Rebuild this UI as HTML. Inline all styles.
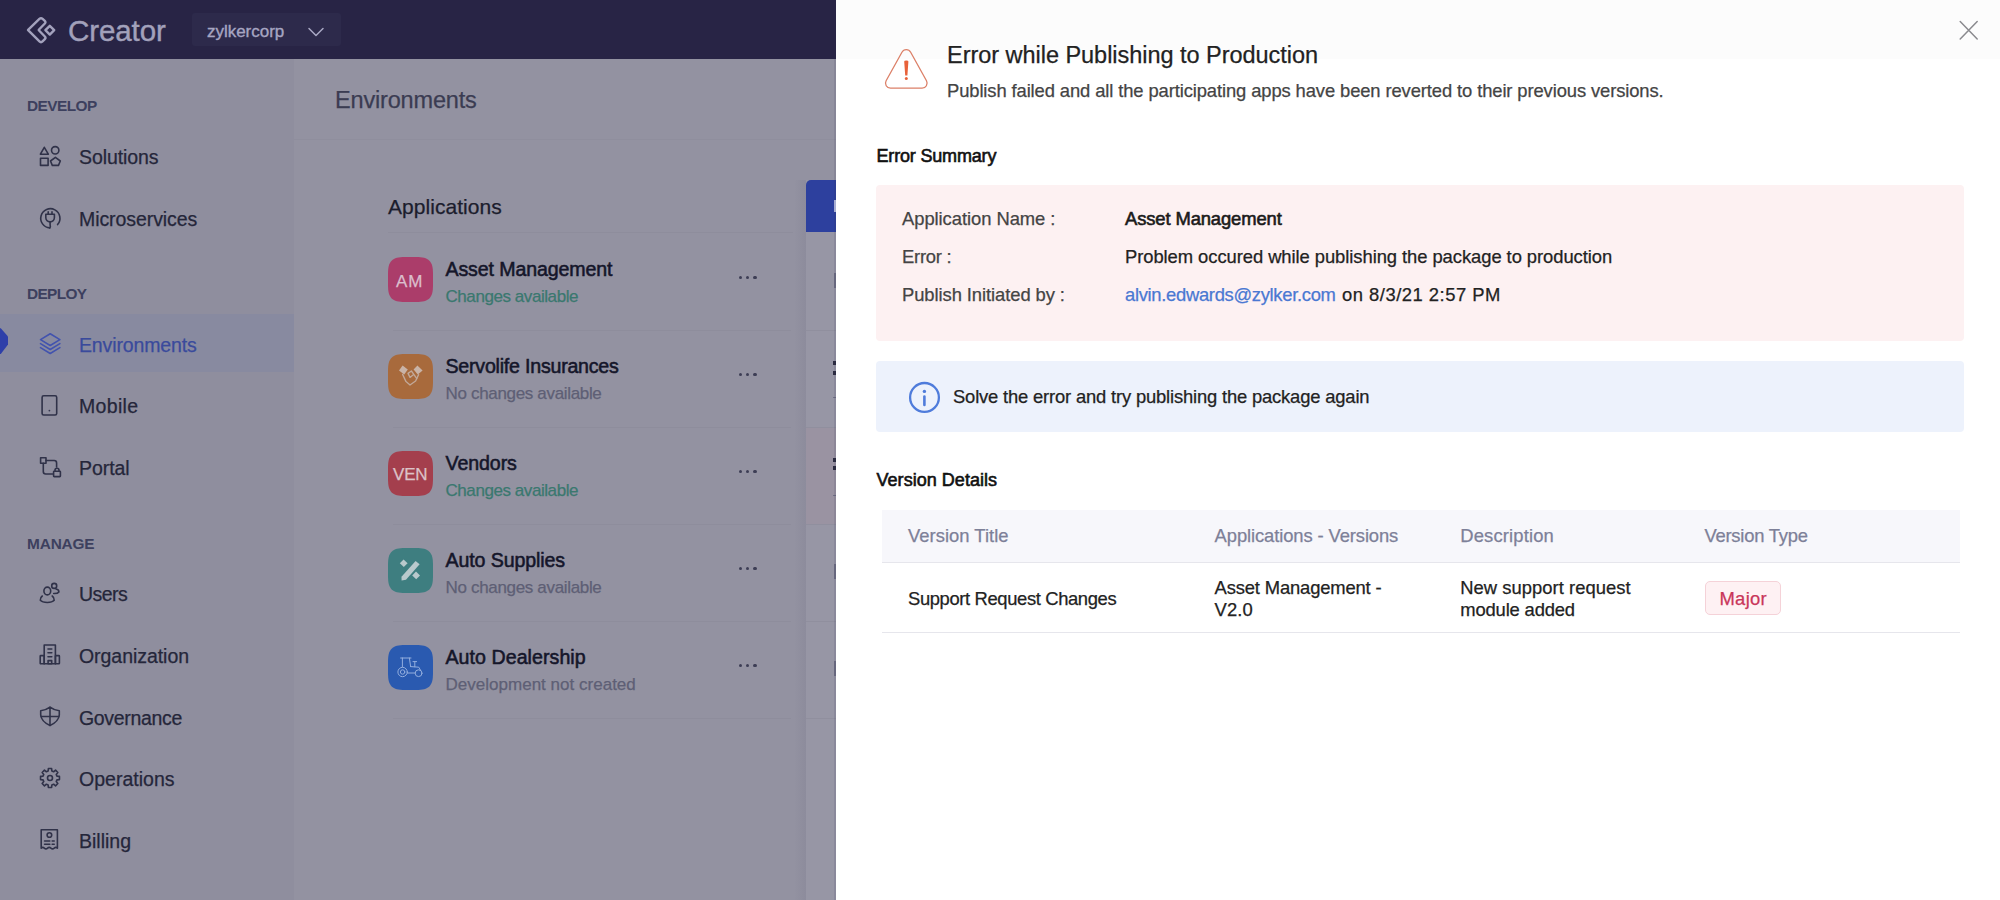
<!DOCTYPE html>
<html lang="en">
<head>
<meta charset="utf-8">
<title>Creator - Environments</title>
<style>
*{box-sizing:border-box;margin:0;padding:0}
html,body{width:2000px;height:900px;overflow:hidden;background:#9392a1;font-family:"Liberation Sans",sans-serif;}
.abs,.t{position:absolute}
.t{white-space:nowrap;line-height:1;-webkit-text-stroke:0.25px currentColor}
.b{font-weight:bold}
#header{position:absolute;left:0;top:0;width:2000px;height:59px;background:#282445}
#sidebar{position:absolute;left:0;top:59px;width:294px;height:841px;background:#8f8e9e}
#main{position:absolute;left:294px;top:59px;width:542px;height:841px;background:#9392a1}
#panel{position:absolute;left:836px;top:0;width:1164px;height:900px;background:#fff}
.sec{font-size:15.4px;font-weight:bold;color:#3d405e;left:27px;-webkit-text-stroke:0}
.nav{font-size:19.5px;color:#25263a;left:79px}
.ico{position:absolute;overflow:visible}
.ico *{fill:none;stroke:#303249;stroke-width:1.6;stroke-linecap:round;stroke-linejoin:round}
.ico .bl *{stroke:#4253ae}
.app{font-size:19.6px;color:#15162a;left:445.5px;-webkit-text-stroke:0.55px #15162a}
.sub{font-size:17px;left:445.5px}
.g{color:#3a786f}
.m{color:#5e5f75}
.hr{position:absolute;height:1px;background:#8e8d9c}
.sq{position:absolute;left:388px;width:45px;height:45px;border-radius:15px}
.dots{position:absolute;left:738.8px;width:20px;height:4px}
.dots i{position:absolute;top:0;width:3.4px;height:3.4px;border-radius:50%;background:#3d3e55}
.p{font-size:18.4px;color:#222}
.sb{-webkit-text-stroke:0.6px currentColor}
.lab{color:#444;left:902px}
.th{color:#7d8098}
</style>
</head>
<body>
<div id="header">
  <svg class="abs" style="left:24px;top:13px" width="34" height="34" viewBox="0 0 34 34">
    <g fill="none" stroke="#a3a2bd" stroke-width="2.4" stroke-linejoin="round" stroke-linecap="round">
      <path d="M4.11 17.21 Q3.90 17.00 4.12 16.79 L15.41 5.93 Q17.00 4.40 18.60 5.91 L20.79 7.97 Q22.10 9.20 20.85 10.50 L14.81 16.78 Q14.60 17.00 14.81 17.22 L20.85 23.50 Q22.10 24.80 20.84 26.09 L18.54 28.43 Q17.00 30.00 15.44 28.45 Z"/>
      <path d="M21.4 17.2 L25.8 12.8 L30.2 17.2 L25.8 21.6 Z"/>
    </g>
  </svg>
  <div class="t" style="top:16px;left:68px;font-size:29.5px;color:#a2a1bb;-webkit-text-stroke:0.4px #a2a1bb;letter-spacing:-0.087px">Creator</div>
  <div class="abs" style="left:192px;top:13px;width:149px;height:33px;background:#2d2a4b;border-radius:3px"></div>
  <div class="t" style="top:23px;left:207px;font-size:17px;color:#a7a6c2;-webkit-text-stroke:0.35px #a7a6c2;letter-spacing:-0.023px">zylkercorp</div>
  <svg class="abs" style="left:307px;top:26px" width="18" height="12" viewBox="0 0 18 12"><path d="M2 2.5 L9 9.5 L16 2.5" fill="none" stroke="#a9a8c4" stroke-width="1.5" stroke-linecap="round" stroke-linejoin="round"/></svg>
</div>

<div id="sidebar"></div>
<div class="abs" style="left:0;top:314px;width:294px;height:58px;background:#888aa0"></div>
<svg class="abs" style="left:0;top:326px" width="10" height="30" viewBox="0 0 10 30"><path d="M0 2.2 L0.8 2.2 L8 10.6 L8 18.6 L0.8 28 L0 28 Z" fill="#2e3fa9"/></svg>
<div class="t sec" style="top:98px;;letter-spacing:-0.556px">DEVELOP</div>
<div class="t nav" style="top:148px;;letter-spacing:-0.085px">Solutions</div>
<div class="t nav" style="top:210px;;letter-spacing:-0.078px">Microservices</div>
<div class="t sec" style="top:286px;;letter-spacing:-0.641px">DEPLOY</div>
<div class="t nav" style="top:336px;color:#3a4a9c;letter-spacing:-0.138px">Environments</div>
<div class="t nav" style="top:397px;;letter-spacing:0.318px">Mobile</div>
<div class="t nav" style="top:459px;;letter-spacing:-0.052px">Portal</div>
<div class="t sec" style="top:536px;;letter-spacing:-0.154px">MANAGE</div>
<div class="t nav" style="top:585px;;letter-spacing:-0.562px">Users</div>
<div class="t nav" style="top:647px;;letter-spacing:-0.047px">Organization</div>
<div class="t nav" style="top:709px;;letter-spacing:-0.325px">Governance</div>
<div class="t nav" style="top:770px;;letter-spacing:0.016px">Operations</div>
<div class="t nav" style="top:832px;;letter-spacing:-0.004px">Billing</div>

<svg class="ico" style="left:40px;top:146px" width="21" height="21" viewBox="0 0 21 21">
  <path d="M4.3 1.3 L8.3 8.2 L0.4 8.2 Z"/><circle cx="15.2" cy="4.3" r="3.7"/><rect x="0.5" y="12.2" width="7.6" height="7.2"/><path d="M15.4 11.4 L20.3 15 L18.5 19.4 L12.3 19.4 L10.5 15 Z"/>
</svg>
<svg class="ico" style="left:40px;top:208px" width="21" height="21" viewBox="0 0 21 21">
  <path d="M9.8 19.9 A9.6 9.6 0 1 1 17.6 16.6"/>
  <path d="M5.8 6.2 L14.4 6.2 L14.4 9.6 A4.3 4.3 0 0 1 5.8 9.6 Z"/>
  <path d="M8.2 6 L8.2 3.9 M12 6 L12 3.9"/>
  <path d="M10.1 14 L10.1 17 A2.9 2.9 0 0 1 9.8 19.9"/>
</svg>
<svg class="ico" style="left:40px;top:333px" width="21" height="22" viewBox="0 0 21 22">
  <g class="bl"><path d="M10.2 0.7 L19.9 6.6 L10.2 12.5 L0.5 6.6 Z"/><path d="M0.5 10.6 L10.2 16.5 L19.9 10.6"/><path d="M0.5 14.6 L10.2 20.5 L19.9 14.6"/></g>
</svg>
<svg class="ico" style="left:41px;top:395px" width="17" height="21" viewBox="0 0 17 21">
  <rect x="1.1" y="0.8" width="14.6" height="19.2" rx="1.6"/><circle cx="8.4" cy="15.6" r="0.9" style="fill:#363850;stroke:none"/>
</svg>
<svg class="ico" style="left:40px;top:457px" width="22" height="21" viewBox="0 0 22 21">
  <rect x="0.6" y="0.8" width="5.4" height="5.4"/>
  <path d="M6 3.5 L14.2 3.5 A2.4 2.4 0 0 1 16.6 5.9 L16.6 10"/>
  <path d="M3.3 6.2 L3.3 14.6 A2.4 2.4 0 0 0 5.7 17 L12.6 17"/>
  <rect x="13.6" y="14.2" width="6.8" height="5.4" rx="0.6"/>
  <path d="M15 14.2 L15 13.3 A2 2 0 0 1 19 13.3 L19 14.2"/>
</svg>
<svg class="ico" style="left:39px;top:583px" width="22" height="21" viewBox="0 0 22 21">
  <ellipse cx="8.3" cy="8" rx="3.4" ry="3.9"/>
  <path d="M3.3 13 C1.8 14 1.2 15.6 1.3 17.3 C4 20.2 12.6 20.2 15.2 17.3 C15.3 15.6 14.6 14 13.2 13"/>
  <circle cx="15.2" cy="2.9" r="2.5"/>
  <path d="M17 6 C18.8 6.4 20 7.4 19.9 9 C19 10.2 17 10.6 14.7 10.5"/>
</svg>
<svg class="ico" style="left:39px;top:644px" width="22" height="21" viewBox="0 0 22 21">
  <path d="M5.2 19.8 L5.2 1 L16.4 1 L16.4 19.8"/>
  <rect x="1.2" y="11.6" width="4" height="8.2" rx="0.6"/><rect x="16.4" y="11.6" width="4" height="8.2" rx="0.6"/>
  <path d="M5.2 19.8 L16.4 19.8"/>
  <path d="M9 5 L12.8 5 M9 8.8 L12.8 8.8 M9 12.7 L12.8 12.7"/>
  <rect x="9.1" y="16.6" width="3.6" height="3.2"/>
</svg>
<svg class="ico" style="left:39.7px;top:706px" width="21" height="21" viewBox="0 0 21 21">
  <path d="M10 1.2 C7.4 3.2 4 4.4 0.7 4.7 L0.7 9 C1.2 13.6 4.4 17 10 19.4 C15.6 17 18.8 13.6 19.3 9 L19.3 4.7 C16 4.4 12.6 3.2 10 1.2 Z"/>
  <path d="M10 1.2 L10 19.4 M1.2 10.5 L18.8 10.5"/>
</svg>
<svg class="ico" style="left:39.8px;top:767.7px" width="20" height="20" viewBox="-10 -10 20 20">
  <path d="M6.96 -1.85 L9.46 -1.62 L9.46 1.62 L6.96 1.85 L6.23 3.61 L7.84 5.54 L5.54 7.84 L3.61 6.23 L1.85 6.96 L1.62 9.46 L-1.62 9.46 L-1.85 6.96 L-3.61 6.23 L-5.54 7.84 L-7.84 5.54 L-6.23 3.61 L-6.96 1.85 L-9.46 1.62 L-9.46 -1.62 L-6.96 -1.85 L-6.23 -3.61 L-7.84 -5.54 L-5.54 -7.84 L-3.61 -6.23 L-1.85 -6.96 L-1.62 -9.46 L1.62 -9.46 L1.85 -6.96 L3.61 -6.23 L5.54 -7.84 L7.84 -5.54 L6.23 -3.61 Z"/><circle cx="0" cy="0" r="2.5"/>
</svg>
<svg class="ico" style="left:40px;top:829px" width="19" height="21" viewBox="0 0 19 21">
  <path d="M1.2 19.2 L1.2 0.8 L17.4 0.8 L17.4 19.2 C16.4 18.2 15.3 18.2 14.2 19.2 C13.1 20.2 12 20.2 10.9 19.2 C9.8 18.2 8.7 18.2 7.6 19.2 C6.5 20.2 5.4 20.2 4.3 19.2 C3.2 18.2 2.2 18.2 1.2 19.2 Z"/>
  <circle cx="9.4" cy="6" r="2.3"/>
  <path d="M4.6 12 L9.8 12 M12.2 12 L14.2 12 M4.6 15.2 L9.8 15.2 M12.2 15.2 L14.2 15.2"/>
</svg>


<div id="main"></div>
<div class="t" style="top:89px;left:335px;font-size:23.5px;color:#3b3c52;letter-spacing:-0.168px">Environments</div>
<div class="hr" style="left:294px;top:139px;width:542px;background:#8f8e9d"></div>
<div class="t" style="top:196px;left:388px;font-size:21px;color:#1c1d2d;letter-spacing:0.039px">Applications</div>
<div class="hr" style="left:388px;top:232px;width:405px"></div>
<div class="hr" style="left:393px;top:330px;width:398px"></div>
<div class="hr" style="left:393px;top:427px;width:398px"></div>
<div class="hr" style="left:393px;top:524px;width:398px"></div>
<div class="hr" style="left:393px;top:621px;width:398px"></div>
<div class="hr" style="left:393px;top:718px;width:398px"></div>

<svg class="abs" style="left:388px;top:257px" width="45" height="45" viewBox="0 0 45 45"><path d="M0 17 C0 4 4 0 17 0 L28 0 C41 0 45 4 45 17 L45 28 C45 41 41 45 28 45 L17 45 C4 45 0 41 0 28 Z" fill="#ab3d6a"/></svg>
<div class="t" style="top:273px;left:396px;font-size:17px;color:#dbbfcd;letter-spacing:0.977px">AM</div>
<div class="t app" style="top:260px;;letter-spacing:-0.121px">Asset Management</div>
<div class="t sub g" style="top:288px;;letter-spacing:-0.433px">Changes available</div>
<div class="dots" style="top:276px"><i style="left:0"></i><i style="left:7.2px"></i><i style="left:14.4px"></i></div>

<svg class="abs" style="left:388px;top:354px" width="45" height="45" viewBox="0 0 45 45"><path d="M0 17 C0 4 4 0 17 0 L28 0 C41 0 45 4 45 17 L45 28 C45 41 41 45 28 45 L17 45 C4 45 0 41 0 28 Z" fill="#a86a3c"/></svg>
<div class="t app" style="top:357px;;letter-spacing:-0.22px">Servolife Insurances</div>
<div class="t sub m" style="top:385px;;letter-spacing:-0.328px">No changes available</div>
<div class="dots" style="top:373px"><i style="left:0"></i><i style="left:7.2px"></i><i style="left:14.4px"></i></div>

<svg class="abs" style="left:388px;top:451px" width="45" height="45" viewBox="0 0 45 45"><path d="M0 17 C0 4 4 0 17 0 L28 0 C41 0 45 4 45 17 L45 28 C45 41 41 45 28 45 L17 45 C4 45 0 41 0 28 Z" fill="#a43f4d"/></svg>
<div class="t" style="top:466px;left:393px;font-size:17px;color:#dcc3c8;letter-spacing:-0.182px">VEN</div>
<div class="t app" style="top:454px;;letter-spacing:-0.085px">Vendors</div>
<div class="t sub g" style="top:482px;;letter-spacing:-0.433px">Changes available</div>
<div class="dots" style="top:470px"><i style="left:0"></i><i style="left:7.2px"></i><i style="left:14.4px"></i></div>

<svg class="abs" style="left:388px;top:548px" width="45" height="45" viewBox="0 0 45 45"><path d="M0 17 C0 4 4 0 17 0 L28 0 C41 0 45 4 45 17 L45 28 C45 41 41 45 28 45 L17 45 C4 45 0 41 0 28 Z" fill="#3e7e80"/></svg>
<div class="t app" style="top:551px;;letter-spacing:-0.106px">Auto Supplies</div>
<div class="t sub m" style="top:579px;;letter-spacing:-0.328px">No changes available</div>
<div class="dots" style="top:567px"><i style="left:0"></i><i style="left:7.2px"></i><i style="left:14.4px"></i></div>

<svg class="abs" style="left:388px;top:645px" width="45" height="45" viewBox="0 0 45 45"><path d="M0 17 C0 4 4 0 17 0 L28 0 C41 0 45 4 45 17 L45 28 C45 41 41 45 28 45 L17 45 C4 45 0 41 0 28 Z" fill="#2a5ab0"/></svg>
<div class="t app" style="top:648px;;letter-spacing:0.051px">Auto Dealership</div>
<div class="t sub m" style="top:676px;;letter-spacing:0.016px">Development not created</div>
<div class="dots" style="top:664px"><i style="left:0"></i><i style="left:7.2px"></i><i style="left:14.4px"></i></div>

<div class="abs" style="left:794px;top:180px;width:12px;height:720px;background:linear-gradient(90deg,rgba(60,58,90,0),rgba(60,58,90,0.07))"></div>
<div class="abs" style="left:806px;top:180px;width:30px;height:720px;background:#9796a5"></div>
<div class="abs" style="left:806px;top:428px;width:30px;height:96px;background:#9a93a2"></div>
<div class="hr" style="left:806px;top:330px;width:30px;background:#908f9e"></div>
<div class="hr" style="left:806px;top:427px;width:30px;background:#908f9e"></div>
<div class="hr" style="left:806px;top:524px;width:30px;background:#908f9e"></div>
<div class="hr" style="left:806px;top:621px;width:30px;background:#908f9e"></div>
<div class="hr" style="left:806px;top:718px;width:30px;background:#908f9e"></div>
<div class="abs" style="left:806px;top:180px;width:30px;height:52px;background:#2d409e;border-radius:5px 0 0 0"></div>
<div class="abs" style="left:834px;top:200px;width:2px;height:12px;background:#b9c0e4"></div>
<div class="abs" style="left:834px;top:273px;width:2px;height:15px;background:#6f6f84"></div>
<div class="abs" style="left:833px;top:361px;width:3px;height:4px;background:#2c2c40"></div>
<div class="abs" style="left:833px;top:371px;width:3px;height:4px;background:#2c2c40"></div>
<div class="abs" style="left:833px;top:397px;width:3px;height:1px;background:#6f6f84"></div>
<div class="abs" style="left:833px;top:458px;width:3px;height:4px;background:#2c2c40"></div>
<div class="abs" style="left:833px;top:466px;width:3px;height:4px;background:#2c2c40"></div>
<div class="abs" style="left:833px;top:495px;width:3px;height:1px;background:#6f6f84"></div>
<div class="abs" style="left:834px;top:564px;width:2px;height:15px;background:#6f6f84"></div>
<div class="abs" style="left:834px;top:661px;width:2px;height:15px;background:#6f6f84"></div>
<div class="abs" style="left:834px;top:59px;width:2px;height:841px;background:rgba(50,48,80,0.12)"></div>

<svg class="abs" style="left:388px;top:354px" width="45" height="45" viewBox="0 0 45 45">
  <g fill="#c9b3a6"><path d="M14.6 11.6 L19.8 15.6 L16.2 20.6 L11 16.6 Z"/><path d="M29.4 11.6 L34.6 16.6 L29.8 20.6 L25.6 15.6 Z"/></g>
  <g fill="none" stroke="#c2a999" stroke-width="1.3" stroke-linecap="round" stroke-linejoin="round"><path d="M14.6 20.4 L18 27.6 L22 31 L27.6 27 L30.6 20.6"/><path d="M20 19.4 L23.4 17 L28.8 24.6 M20 19.4 L22 23.4 L25 21"/></g>
</svg>
<svg class="abs" style="left:388px;top:548px" width="45" height="45" viewBox="0 0 45 45">
  <g fill="#b9c9cc"><path d="M13.5 28.8 L27.6 13 L31.6 16.2 L18 31.8 L13.6 32.4 Z"/><path d="M15.6 11.4 L19.6 15.2 L15.8 19 L11.8 15.2 Z"/><path d="M28 23.6 L32 27.4 L28.2 31.2 L24.2 27.4 Z"/></g>
</svg>
<svg class="abs" style="left:388px;top:645px" width="45" height="45" viewBox="0 0 45 45">
  <g fill="none" stroke="#93aede" stroke-width="1" stroke-linecap="round" stroke-linejoin="round">
    <circle cx="14.6" cy="27" r="4.7"/><circle cx="14.6" cy="27" r="2.2"/><circle cx="30.6" cy="28.2" r="3.4"/>
    <path d="M12.6 13 L23 13 M14.4 13 L14.4 21.8 M21.4 13 L22.6 21.6 M22.6 21.6 L30.8 22.2 L32.4 25 M19.4 28 L27.2 28 M26.8 16.6 L26.8 21.8 M25 16.6 L28.6 16.6"/>
  </g>
</svg>


<div id="panel"></div>
<div class="abs" style="left:836px;top:0;width:1164px;height:59px;background:#fcfcfc"></div>
<svg class="abs" style="left:1958px;top:20px" width="22" height="22" viewBox="0 0 22 22"><path d="M2.2 1.6 L19.2 19 M19.2 1.6 L2.2 19" fill="none" stroke="#8a8a8e" stroke-width="1.5" stroke-linecap="round"/></svg>
<svg class="abs" style="left:880px;top:44px" width="54" height="50" viewBox="0 0 54 50">
  <path d="M21.93 8.28 A5.0 5.0 0 0 1 30.67 8.28 L46.48 36.77 A5.0 5.0 0 0 1 42.11 44.20 L10.49 44.20 A5.0 5.0 0 0 1 6.12 36.77 Z" fill="none" stroke="#dc8068" stroke-width="1.3" stroke-linejoin="round"/>
  <path d="M24.2 17.6 Q24.1 16.6 26.3 16.6 Q28.5 16.6 28.4 17.6 L27.4 31.4 L25.2 31.4 Z" fill="#e8623a"/>
  <circle cx="26.3" cy="34.6" r="1.5" fill="#e8623a"/>
</svg>
<div class="t" style="top:44px;left:947px;font-size:23.5px;color:#222;letter-spacing:-0.033px">Error while Publishing to Production</div>
<div class="t p" style="top:82px;left:947px;color:#444;letter-spacing:-0.112px">Publish failed and all the participating apps have been reverted to their previous versions.</div>
<div class="t p sb" style="top:147px;left:876.5px;font-size:18px;color:#111;letter-spacing:-0.175px">Error Summary</div>

<div class="abs" style="left:876px;top:185px;width:1088px;height:156px;background:#fdf1f2;border-radius:4px"></div>
<div class="t p lab" style="top:210px;;letter-spacing:-0.055px">Application Name :</div>
<div class="t p sb" style="top:210px;left:1125px;color:#1a1a1a;letter-spacing:-0.112px">Asset Management</div>
<div class="t p lab" style="top:248px;;letter-spacing:-0.239px">Error :</div>
<div class="t p" style="top:248px;left:1125px;letter-spacing:-0.062px">Problem occured while publishing the package to production</div>
<div class="t p lab" style="top:286px;;letter-spacing:-0.077px">Publish Initiated by :</div>
<div class="t p" style="top:286px;left:1125px;color:#4a78d2;letter-spacing:-0.308px">alvin.edwards@zylker.com</div>
<div class="t p" style="top:286px;left:1342px;letter-spacing:0.502px">on 8/3/21 2:57 PM</div>

<div class="abs" style="left:876px;top:361px;width:1088px;height:71px;background:#edf2fc;border-radius:4px"></div>
<svg class="abs" style="left:906px;top:379px" width="36" height="36" viewBox="0 0 36 36">
  <circle cx="18.5" cy="18.4" r="14.4" fill="none" stroke="#4f7cdb" stroke-width="2.3"/>
  <path d="M18.4 17.6 L18.4 26" stroke="#4f7cdb" stroke-width="2.6" stroke-linecap="round" fill="none"/>
  <circle cx="18.4" cy="12.4" r="1.7" fill="#4f7cdb"/>
</svg>
<div class="t p" style="top:388px;left:953px;letter-spacing:-0.172px">Solve the error and try publishing the package again</div>

<div class="t p sb" style="top:471px;left:876.5px;font-size:18px;color:#111;letter-spacing:0.036px">Version Details</div>
<div class="abs" style="left:882px;top:510px;width:1078px;height:52px;background:#f7f7fb"></div>
<div class="abs" style="left:882px;top:562px;width:1078px;height:1px;background:#e6e6ec"></div>
<div class="abs" style="left:882px;top:632px;width:1078px;height:1px;background:#e6e6ec"></div>
<div class="t p th" style="top:527px;left:908px;letter-spacing:0.025px">Version Title</div>
<div class="t p th" style="top:527px;left:1214.6px;letter-spacing:-0.106px">Applications - Versions</div>
<div class="t p th" style="top:527px;left:1460.3px;letter-spacing:0.149px">Description</div>
<div class="t p th" style="top:527px;left:1704.4px;letter-spacing:-0.215px">Version Type</div>
<div class="t p" style="top:590px;left:908px;letter-spacing:-0.368px">Support Request Changes</div>
<div class="t p" style="top:579px;left:1214.6px;letter-spacing:-0.155px">Asset Management -</div>
<div class="t p" style="top:601px;left:1214.6px;letter-spacing:0.07px">V2.0</div>
<div class="t p" style="top:579px;left:1460.3px;letter-spacing:0.03px">New support request</div>
<div class="t p" style="top:601px;left:1460.3px;letter-spacing:-0.163px">module added</div>
<div class="abs" style="left:1705px;top:581px;width:76px;height:34px;background:#fef1f3;border:1px solid #f5d2d8;border-radius:5px"></div>
<div class="t p" style="top:590px;left:1719.5px;color:#c9365a;letter-spacing:0.297px">Major</div>

</body>
</html>
